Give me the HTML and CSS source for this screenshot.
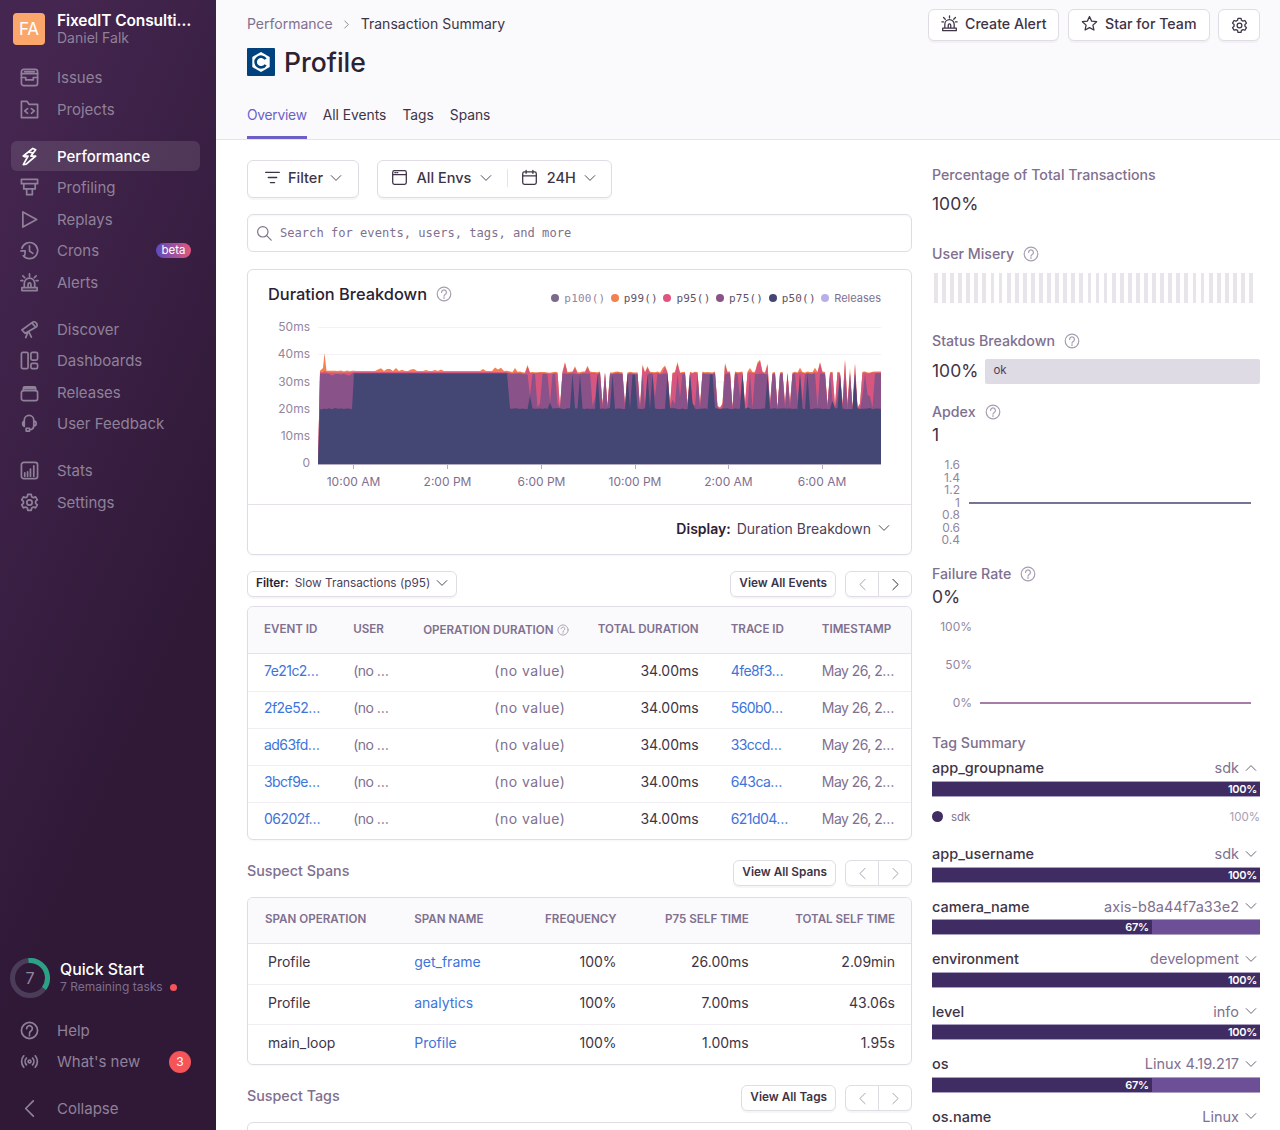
FILE: index.html
```html
<!DOCTYPE html>
<html lang="en">
<head>
<meta charset="utf-8">
<title>Profile - Transaction Summary</title>
<link rel="stylesheet" href="styles.css">
</head>
<body>
<svg class="sprite" aria-hidden="true">
  <defs>
    <symbol id="i-issues" viewBox="0 0 20 20"><rect x="1.500" y="1.500" width="17" height="17" rx="2.500"/><path d="M1.500 6h17M1.500 10h4.500v2.500h8V10h4.500M5 3.800h10"/></symbol>
    <symbol id="i-projects" viewBox="0 0 20 20"><path d="M1.500 18.500V1.500h6l2 3h9v14zM8 9l-3 2.500L8 14M12 9l3 2.500L12 14"/></symbol>
    <symbol id="i-perf" viewBox="0 0 20 20"><path d="M13.500 1.500L3.500 9.500h5l-5 9 3-.5 10-8.500h-5l5-6.500zM3.500 9.500l2 1M9.500 5.500l3 .5"/></symbol>
    <symbol id="i-profiling" viewBox="0 0 20 20"><path d="M1.500 1.500h17v4.500h-17zM4 6v5.500h12V6M7 11.500v6h6v-6"/></symbol>
    <symbol id="i-replays" viewBox="0 0 20 20"><path d="M3 2l14.500 8L3 18z"/></symbol>
    <symbol id="i-crons" viewBox="0 0 20 20"><path d="M2 7.500A8.500 8.500 0 1 1 3.500 15.500M10 5v5.500l3.500 2.500M1 10.500h4.500l-.5 4.500"/></symbol>
    <symbol id="i-alert" viewBox="0 0 20 20"><path d="M4.500 15V11a5.500 5.500 0 0 1 11 0v4M2 15.500h16v3H2zM10 1v2.500M3 3l2 2M17 3l-2 2M1 8h2M17 8h2M8.500 15v-3a1.500 1.500 0 0 1 3 0v3"/></symbol>
    <symbol id="i-discover" viewBox="0 0 20 20"><path d="M2 10.500l3.500 3.500L17.500 7c1-1 .5-3-.5-4s-3-1.500-4-.5zM9 12l3 6M8.500 12.500L6 18.500M12.500 3l4 4.500"/></symbol>
    <symbol id="i-dash" viewBox="0 0 20 20"><rect x="1.500" y="1.500" width="7" height="17" rx="1.500"/><rect x="11.500" y="1.500" width="7" height="8" rx="1.500"/><rect x="11.500" y="13" width="7" height="5.500" rx="1.500"/></symbol>
    <symbol id="i-releases" viewBox="0 0 20 20"><rect x="1.500" y="8" width="17" height="10.500" rx="2"/><path d="M3.500 8V5.500a1.500 1.500 0 0 1 1.500-1.500h10a1.500 1.500 0 0 1 1.500 1.500V8M3.500 6h13"/></symbol>
    <symbol id="i-feedback" viewBox="0 0 20 20"><path d="M4.500 12V6.500a5 5 0 0 1 10 0V12M4.500 7.500a3 3 0 0 0 0 5.500M14.500 7.500a2.500 2.500 0 0 1 0 5M14.500 12c0 3-2 4.500-4.500 4.500M6.500 15h3.500v3h-3.500z"/></symbol>
    <symbol id="i-stats" viewBox="0 0 20 20"><rect x="1.500" y="1.500" width="17" height="17" rx="2.500"/><path d="M5 16v-3.500M8 16v-4.500M11 16V8.500M14.500 16V5"/></symbol>
    <symbol id="i-gear" viewBox="0 0 20 20"><path d="M8.200 1.500h3.600l.5 2.400 1.800 1 2.300-.8 1.800 3.100-1.800 1.600v2.100l1.800 1.600-1.800 3.100-2.300-.8-1.800 1-.5 2.400H8.200l-.5-2.400-1.800-1-2.300.8-1.800-3.100 1.800-1.600V8.800L1.800 7.200l1.800-3.100 2.300.8 1.800-1z"/><circle cx="10" cy="10" r="2.800"/></symbol>
    <symbol id="i-help" viewBox="0 0 20 20"><circle cx="10" cy="10" r="8.500"/><path d="M7 8a3 3 0 1 1 4.500 2.600c-1 .6-1.500 1.100-1.500 2.200M10 14.500v1"/></symbol>
    <symbol id="i-new" viewBox="0 0 20 20"><circle cx="10" cy="10" r="1.500"/><path d="M6.800 6.500a5 5 0 0 0 0 7M13.200 6.500a5 5 0 0 1 0 7M4 4a9 9 0 0 0 0 12M16 4a9 9 0 0 1 0 12"/></symbol>
    <symbol id="i-left" viewBox="0 0 20 20"><path d="M14 2l-8 8 8 8"/></symbol>
    <symbol id="i-right" viewBox="0 0 20 20"><path d="M6 2l8 8-8 8"/></symbol>
    <symbol id="i-down" viewBox="0 0 20 20"><path d="M2 6l8 8 8-8"/></symbol>
    <symbol id="i-up" viewBox="0 0 20 20"><path d="M2 14l8-8 8 8"/></symbol>
    <symbol id="i-star" viewBox="0 0 20 20"><path d="M10 1.800l2.500 5.400 5.900.7-4.400 4 1.200 5.800-5.200-2.900-5.200 2.900L6 11.900l-4.400-4 5.900-.7z"/></symbol>
    <symbol id="i-lines" viewBox="0 0 20 20"><path d="M2 4h16M5 10h10M7.500 16h5"/></symbol>
    <symbol id="i-window" viewBox="0 0 20 20"><rect x="2" y="2" width="16" height="16" rx="2"/><path d="M2 6.500h16M4.500 4.300h1M7 4.300h1"/></symbol>
    <symbol id="i-cal" viewBox="0 0 20 20"><rect x="2" y="3.500" width="16" height="14.500" rx="2"/><path d="M2 8h16M6 1.500v3.500M14 1.500v3.500"/></symbol>
    <symbol id="i-search" viewBox="0 0 20 20"><circle cx="8.500" cy="8.500" r="6.500"/><path d="M13.300 13.300L19 19"/></symbol>
  </defs>
</svg>

<div class="app">
  <aside class="sidebar">
    <div class="org">
      <div class="avatar">FA</div>
      <div class="org-text">
        <div class="org-name">FixedIT Consulti…</div>
        <div class="org-user">Daniel Falk</div>
      </div>
    </div>
    <nav class="nav">
      <div class="nav-group">
        <a class="nav-item"><svg class="nav-icon"><use href="#i-issues"/></svg>Issues</a>
        <a class="nav-item"><svg class="nav-icon"><use href="#i-projects"/></svg>Projects</a>
      </div>
      <div class="nav-group">
        <a class="nav-item active"><svg class="nav-icon"><use href="#i-perf"/></svg>Performance</a>
        <a class="nav-item"><svg class="nav-icon"><use href="#i-profiling"/></svg>Profiling</a>
        <a class="nav-item"><svg class="nav-icon"><use href="#i-replays"/></svg>Replays</a>
        <a class="nav-item"><svg class="nav-icon"><use href="#i-crons"/></svg>Crons<span class="beta">beta</span></a>
        <a class="nav-item"><svg class="nav-icon"><use href="#i-alert"/></svg>Alerts</a>
      </div>
      <div class="nav-group">
        <a class="nav-item"><svg class="nav-icon"><use href="#i-discover"/></svg>Discover</a>
        <a class="nav-item"><svg class="nav-icon"><use href="#i-dash"/></svg>Dashboards</a>
        <a class="nav-item"><svg class="nav-icon"><use href="#i-releases"/></svg>Releases</a>
        <a class="nav-item"><svg class="nav-icon"><use href="#i-feedback"/></svg>User Feedback</a>
      </div>
      <div class="nav-group">
        <a class="nav-item"><svg class="nav-icon"><use href="#i-stats"/></svg>Stats</a>
        <a class="nav-item"><svg class="nav-icon"><use href="#i-gear"/></svg>Settings</a>
      </div>
    </nav>
    <div class="side-foot">
      <div class="quick">
        <svg class="ring" viewBox="0 0 40 40">
          <circle class="ring-track" cx="20" cy="20" r="17.500"/>
          <circle class="ring-fill" cx="20" cy="20" r="17.500"/>
          <text class="ring-num" x="20" y="25.500">7</text>
        </svg>
        <div class="quick-text">
          <div class="quick-title">Quick Start</div>
          <div class="quick-sub">7 Remaining tasks<span class="red-dot"></span></div>
        </div>
      </div>
      <div class="foot-links">
        <a class="nav-item"><svg class="nav-icon"><use href="#i-help"/></svg>Help</a>
        <a class="nav-item"><svg class="nav-icon"><use href="#i-new"/></svg>What's new<span class="count">3</span></a>
      </div>
      <a class="nav-item collapse"><svg class="nav-icon"><use href="#i-left"/></svg>Collapse</a>
    </div>
  </aside>

  <main class="main">
    <header class="page-head">
      <div class="head-top">
        <div class="head-left">
          <div class="crumbs"><span class="crumb-link">Performance</span><svg class="crumb-sep"><use href="#i-right"/></svg><span>Transaction Summary</span></div>
          <h1 class="title">
            <svg class="logo" viewBox="0 0 28 28"><rect width="28" height="28" rx="1" fill="#00427e"/><path d="M14 4l8.700 5v10L14 24l-8.700-5V9z" fill="#fff"/><path d="M18.600 11.200a5.400 5.400 0 1 0 0 5.600" fill="none" stroke="#00427e" stroke-width="2.600"/></svg>
            Profile
          </h1>
        </div>
        <div class="head-actions">
          <button class="btn btn-head"><svg class="btn-icon"><use href="#i-alert"/></svg>Create Alert</button>
          <button class="btn btn-head"><svg class="btn-icon"><use href="#i-star"/></svg>Star for Team</button>
          <button class="btn btn-gear"><svg class="btn-icon"><use href="#i-gear"/></svg></button>
        </div>
      </div>
      <div class="tabs">
        <a class="tab current">Overview</a>
        <a class="tab">All Events</a>
        <a class="tab">Tags</a>
        <a class="tab">Spans</a>
      </div>
    </header>

    <div class="content">
      <section class="col-left">
        <div class="filters">
          <button class="btn btn-filter"><svg class="btn-icon"><use href="#i-lines"/></svg>Filter<svg class="chev"><use href="#i-down"/></svg></button>
          <div class="btn page-filter">
            <span class="pf-part"><svg class="btn-icon"><use href="#i-window"/></svg>All Envs<svg class="chev"><use href="#i-down"/></svg></span>
            <span class="pf-sep"></span>
            <span class="pf-part"><svg class="btn-icon"><use href="#i-cal"/></svg>24H<svg class="chev"><use href="#i-down"/></svg></span>
          </div>
        </div>
        <div class="search"><svg class="search-icon"><use href="#i-search"/></svg><span>Search for events, users, tags, and more</span></div>

        <div class="card chart-card">
          <div class="chart-head">
            <div class="chart-title">Duration Breakdown<svg class="help-lg"><use href="#i-help"/></svg></div>
            <div class="legend">
              <span class="lg"><i class="dot c-100"></i><span class="mono muted">p100()</span></span>
              <span class="lg"><i class="dot c-99"></i><span class="mono">p99()</span></span>
              <span class="lg"><i class="dot c-95"></i><span class="mono">p95()</span></span>
              <span class="lg"><i class="dot c-75"></i><span class="mono">p75()</span></span>
              <span class="lg"><i class="dot c-50"></i><span class="mono">p50()</span></span>
              <span class="lg"><i class="dot c-rel"></i><span>Releases</span></span>
            </div>
          </div>
          <svg id="duration-chart" class="chart" viewBox="248 317 663 187">
            <g class="grid-lines">
              <path d="M318 327.500H881M318 354.500H881M318 382H881M318 409.500H881M318 437H881"/>
            </g>
            <path id="s99" fill="#f38150"/>
            <path id="s95" fill="#d6567f"/>
            <path id="s75" fill="#895289"/>
            <path id="s50" fill="#444674"/>
            <path class="axis" d="M318 464.500H881M353.500 465v4M447.500 465v4M541.500 465v4M635.500 465v4M728.500 465v4M822.500 465v4"/>
            <g class="y-labels">
              <text x="310" y="331">50ms</text><text x="310" y="358">40ms</text><text x="310" y="385.500">30ms</text><text x="310" y="413">20ms</text><text x="310" y="440">10ms</text><text x="310" y="467">0</text>
            </g>
            <g class="x-labels">
              <text x="353.500" y="486">10:00 AM</text><text x="447.500" y="486">2:00 PM</text><text x="541.500" y="486">6:00 PM</text><text x="635" y="486">10:00 PM</text><text x="728.500" y="486">2:00 AM</text><text x="822" y="486">6:00 AM</text>
            </g>
          </svg>
          <div class="chart-foot"><b>Display:</b><span class="disp-val">Duration Breakdown</span><svg class="chev"><use href="#i-down"/></svg></div>
        </div>

        <div class="sec-row first">
          <button class="btn btn-small btn-tfilter"><b>Filter:</b><span class="tf-val">Slow Transactions (p95)</span><svg class="chev"><use href="#i-down"/></svg></button>
          <div class="sec-actions">
            <button class="btn btn-small">View All Events</button>
            <div class="btn pager"><span class="pg off"><svg><use href="#i-left"/></svg></span><span class="pg"><svg><use href="#i-right"/></svg></span></div>
          </div>
        </div>
        <table class="card tbl tbl-events">
          <thead><tr><th>Event ID</th><th>User</th><th class="r op">Operation Duration<svg class="help-sm"><use href="#i-help"/></svg></th><th class="r">Total Duration</th><th>Trace ID</th><th>Timestamp</th></tr></thead>
          <tbody>
            <tr><td class="tr"><a>7e21c2…</a></td><td class="mut tr">(no …</td><td class="r mut nv">(no value)</td><td class="r">34.00ms</td><td class="tr"><a>4fe8f3…</a></td><td class="mut tr">May 26, 2…</td></tr>
            <tr><td class="tr"><a>2f2e52…</a></td><td class="mut tr">(no …</td><td class="r mut nv">(no value)</td><td class="r">34.00ms</td><td class="tr"><a>560b0…</a></td><td class="mut tr">May 26, 2…</td></tr>
            <tr><td class="tr"><a>ad63fd…</a></td><td class="mut tr">(no …</td><td class="r mut nv">(no value)</td><td class="r">34.00ms</td><td class="tr"><a>33ccd…</a></td><td class="mut tr">May 26, 2…</td></tr>
            <tr><td class="tr"><a>3bcf9e…</a></td><td class="mut tr">(no …</td><td class="r mut nv">(no value)</td><td class="r">34.00ms</td><td class="tr"><a>643ca…</a></td><td class="mut tr">May 26, 2…</td></tr>
            <tr><td class="tr"><a>06202f…</a></td><td class="mut tr">(no …</td><td class="r mut nv">(no value)</td><td class="r">34.00ms</td><td class="tr"><a>621d04…</a></td><td class="mut tr">May 26, 2…</td></tr>
          </tbody>
        </table>

        <div class="sec-row">
          <h2 class="sec-title">Suspect Spans</h2>
          <div class="sec-actions">
            <button class="btn btn-small">View All Spans</button>
            <div class="btn pager"><span class="pg off"><svg><use href="#i-left"/></svg></span><span class="pg off"><svg><use href="#i-right"/></svg></span></div>
          </div>
        </div>
        <table class="card tbl tbl-spans">
          <thead><tr><th>Span Operation</th><th>Span Name</th><th class="r">Frequency</th><th class="r">P75 Self Time</th><th class="r">Total Self Time</th></tr></thead>
          <tbody>
            <tr><td class="pad">Profile</td><td><a>get_frame</a></td><td class="r">100%</td><td class="r">26.00ms</td><td class="r">2.09min</td></tr>
            <tr><td class="pad">Profile</td><td><a>analytics</a></td><td class="r">100%</td><td class="r">7.00ms</td><td class="r">43.06s</td></tr>
            <tr><td class="pad">main_loop</td><td><a>Profile</a></td><td class="r">100%</td><td class="r">1.00ms</td><td class="r">1.95s</td></tr>
          </tbody>
        </table>

        <div class="sec-row">
          <h2 class="sec-title">Suspect Tags</h2>
          <div class="sec-actions">
            <button class="btn btn-small">View All Tags</button>
            <div class="btn pager"><span class="pg off"><svg><use href="#i-left"/></svg></span><span class="pg off"><svg><use href="#i-right"/></svg></span></div>
          </div>
        </div>
        <div class="card tags-table"></div>
      </section>

      <section class="col-right">
        <h3 class="side-h s-pct">Percentage of Total Transactions</h3>
        <div class="side-val v-pct">100%</div>

        <h3 class="side-h s-misery">User Misery<svg class="help-lg"><use href="#i-help"/></svg></h3>
        <div class="misery"></div>

        <h3 class="side-h s-status">Status Breakdown<svg class="help-lg"><use href="#i-help"/></svg></h3>
        <div class="status"><span class="side-val">100%</span><span class="status-bar">ok</span></div>

        <h3 class="side-h s-apdex">Apdex<svg class="help-lg"><use href="#i-help"/></svg></h3>
        <div class="side-val v-tight">1</div>
        <svg class="mini mini-apdex" viewBox="932 458 328 90">
          <g class="mini-labels">
            <text x="960" y="469">1.6</text><text x="960" y="481.500">1.4</text><text x="960" y="494">1.2</text><text x="960" y="506.500">1</text><text x="960" y="519">0.8</text><text x="960" y="531.500">0.6</text><text x="960" y="544">0.4</text>
          </g>
          <path d="M969 503H1251" stroke="#444674" stroke-width="1.500"/>
        </svg>

        <h3 class="side-h s-fail">Failure Rate<svg class="help-lg"><use href="#i-help"/></svg></h3>
        <div class="side-val v-tight">0%</div>
        <svg class="mini mini-fail" viewBox="932 615 328 100">
          <g class="mini-labels">
            <text x="972" y="631">100%</text><text x="972" y="669">50%</text><text x="972" y="706.500">0%</text>
          </g>
          <path d="M980 703H1251" stroke="#895289" stroke-width="1.500"/>
        </svg>

        <h3 class="side-h s-tags">Tag Summary</h3>
        <div class="tag first-tag">
          <div class="tag-head"><span class="tag-key">app_groupname</span><span class="tag-val">sdk</span><svg class="chev"><use href="#i-up"/></svg></div>
          <div class="tag-bar"><span class="seg w-100">100%</span></div>
          <div class="tag-detail"><i class="tag-dot"></i><span>sdk</span><span class="tag-pct">100%</span></div>
        </div>
        <div class="tag">
          <div class="tag-head"><span class="tag-key">app_username</span><span class="tag-val">sdk</span><svg class="chev"><use href="#i-down"/></svg></div>
          <div class="tag-bar"><span class="seg w-100">100%</span></div>
        </div>
        <div class="tag">
          <div class="tag-head"><span class="tag-key">camera_name</span><span class="tag-val">axis-b8a44f7a33e2</span><svg class="chev"><use href="#i-down"/></svg></div>
          <div class="tag-bar"><span class="seg w-67">67%</span></div>
        </div>
        <div class="tag">
          <div class="tag-head"><span class="tag-key">environment</span><span class="tag-val">development</span><svg class="chev"><use href="#i-down"/></svg></div>
          <div class="tag-bar"><span class="seg w-100">100%</span></div>
        </div>
        <div class="tag">
          <div class="tag-head"><span class="tag-key">level</span><span class="tag-val">info</span><svg class="chev"><use href="#i-down"/></svg></div>
          <div class="tag-bar"><span class="seg w-100">100%</span></div>
        </div>
        <div class="tag">
          <div class="tag-head"><span class="tag-key">os</span><span class="tag-val">Linux 4.19.217</span><svg class="chev"><use href="#i-down"/></svg></div>
          <div class="tag-bar"><span class="seg w-67">67%</span></div>
        </div>
        <div class="tag">
          <div class="tag-head"><span class="tag-key">os.name</span><span class="tag-val">Linux</span><svg class="chev"><use href="#i-down"/></svg></div>
        </div>
      </section>
    </div>
  </main>
</div>
<script src="chart.js"></script>
</body>
</html>
```

FILE: styles.css
```css
* { box-sizing: border-box; }
html, body { margin: 0; height: 100%; overflow: hidden; }
body { font-family: Inter, "Noto Sans", sans-serif; font-size: 14.5px; color: #3e3446; background: #fff; }
.sprite { position: absolute; width: 0; height: 0; }
svg use { fill: none; stroke: currentColor; stroke-width: 1.500; stroke-linecap: round; stroke-linejoin: round; }
h1, h2, h3 { margin: 0; font-weight: 500; }
button { font: inherit; color: inherit; }

.app { display: flex; height: 1130px; overflow: hidden; }

/* sidebar */
.sidebar { width: 216px; flex: none; display: flex; flex-direction: column; padding: 13px 16px 7px 11px; background: linear-gradient(294.17deg, #2f1937 35.57%, #452650 92.42%); color: #9386a0; }
.org { display: flex; align-items: center; gap: 12px; margin-left: 2px; height: 32px; }
.avatar { width: 32px; height: 32px; border-radius: 4px; background: #fba76b; color: #fff; font-size: 17px; display: flex; align-items: center; justify-content: center; }
.org-name { color: #fff; font-weight: 600; font-size: 15.500px; line-height: 17px; white-space: nowrap; letter-spacing: -.1px; }
.org-user { font-size: 14px; line-height: 17px; color: #8f8199; }
.nav { margin-top: 17.500px; }
.nav-group + .nav-group { margin-top: 17px; }
.nav-item { display: flex; align-items: center; height: 30px; margin-bottom: 1.500px; padding-left: 9px; padding-right: 9px; gap: 19px; border-radius: 6px; font-size: 15px; color: #8f8199; }
.nav-icon { width: 19px; height: 19px; flex: none; margin-right: -1px; }
.nav-item .nav-icon use { stroke-width: 1.800; }
.nav-item.active { background: rgba(255,255,255,.11); color: #fff; font-weight: 500; }
.beta { margin-left: auto; width: 35px; height: 15px; border-radius: 8px; background: linear-gradient(90deg, #5b4bc0, #e1567c); color: #fff; font-size: 11.500px; line-height: 15px; text-align: center; }
.count { margin-left: auto; width: 22px; height: 22px; border-radius: 50%; background: #f55459; color: #fff; font-size: 12px; line-height: 22px; text-align: center; }
.side-foot { margin-top: auto; }
.quick { display: flex; align-items: center; gap: 10px; height: 40px; margin-left: -1px; }
.ring { width: 40px; height: 40px; flex: none; }
.ring-track { fill: none; stroke: #4b3c59; stroke-width: 5; }
.ring-fill { fill: none; stroke: #2ba185; stroke-width: 5; stroke-dasharray: 40 110; transform: rotate(-95deg); transform-origin: 20px 20px; }
.ring-num { fill: #9386a0; font-size: 16px; text-anchor: middle; }
.quick-title { color: #fff; font-size: 15.800px; font-weight: 500; line-height: 18px; }
.quick-sub { font-size: 12px; line-height: 16px; color: #7d6e8b; display: flex; align-items: center; white-space: nowrap; }
.red-dot { width: 7px; height: 7px; border-radius: 50%; background: #f55459; margin-left: 7px; }
.foot-links { margin-top: 17px; }
.collapse { margin-top: 16.500px; margin-bottom: 0; }

/* header */
.main { flex: 1; min-width: 0; }
.page-head { height: 139.500px; background: #faf9fb; border-bottom: 1px solid #e7e1ec; padding: 9px 20px 0 31px; display: flex; flex-direction: column; }
.head-top { display: flex; justify-content: space-between; align-items: flex-start; }
.crumbs { display: flex; align-items: center; height: 28px; font-size: 14px; color: #3e3446; }
.crumb-link { color: #80708f; }
.crumb-sep { width: 9px; height: 11px; margin: 2px 10px 0 9px; color: #5f5269; }
.title { display: flex; align-items: center; gap: 9px; font-size: 26.500px; font-weight: 500; color: #2b2233; margin-top: 11px; height: 28px; }
.logo { width: 28px; height: 28px; }
.head-actions { display: flex; gap: 8.500px; }
.btn { display: inline-flex; align-items: center; background: #fff; border: 1px solid #e0dce5; border-radius: 6px; box-shadow: 0 2px 0 rgba(43,34,51,.04); font-weight: 500; }
.btn-head { height: 32px; padding: 0 12px 3px; gap: 7px; font-size: 14.200px; }
.btn-gear { width: 42px; height: 32px; justify-content: center; padding: 0; }
.btn-icon { width: 17px; height: 17px; flex: none; }
.tabs { margin-top: auto; display: flex; gap: 16px; }
.tab { height: 38px; line-height: 28px; font-size: 13.800px; color: #3e3446; }
.tab.current { color: #6c5fc7; border-bottom: 3px solid #6c5fc7; letter-spacing: -.25px; }

/* content */
.content { display: grid; grid-template-columns: 665px 328px; gap: 20px; padding: 20.500px 0 0 31px; }
.filters { display: flex; gap: 18px; }
.btn-filter { height: 38px; width: 112px; padding: 0 0 3px 16px; gap: 7px; }
.chev { width: 12px; height: 12px; flex: none; color: #3e3446; }
.page-filter { height: 38px; width: 235px; padding: 0 0 3px 13px; }
.pf-part { display: inline-flex; align-items: center; gap: 8.500px; }
.pf-sep { width: 1px; height: 18px; background: #e7e1ec; margin: 0 13px 0 15.500px; }
.search { display: flex; align-items: center; height: 38px; margin-top: 16px; border: 1px solid #e0dce5; border-radius: 6px; padding-left: 8px; gap: 8px; background: #fff; font-family: "DejaVu Sans Mono", monospace; font-size: 12.100px; color: #80708f; box-shadow: inset 0 1px 2px rgba(43,34,51,.04); }
.search-icon { width: 16px; height: 16px; color: #80708f; }
.card { border: 1px solid #e0dce5; border-radius: 6px; background: #fff; box-shadow: 0 1px 2px rgba(43,34,51,.04); }
.chart-card { margin-top: 17px; height: 286px; }
.chart-head { height: 47px; display: flex; justify-content: space-between; padding: 14px 30px 0 20px; }
.chart-title { font-size: 16.400px; font-weight: 500; color: #2b2233; display: flex; align-items: center; gap: 9px; height: 20px; }
.help-lg { width: 16px; height: 16px; color: #a79db1; flex: none; }
.legend { display: flex; gap: 5.500px; font-size: 11px; color: #80708f; align-self: flex-start; margin-top: 7px; }
.lg { display: flex; align-items: center; gap: 5px; }
.mono { font-family: "DejaVu Sans Mono", monospace; font-size: 11px; color: #5f5269; letter-spacing: .2px; }
.mono.muted { color: #9386a0; }
.dot { width: 8px; height: 8px; border-radius: 50%; }
.c-100 { background: #7c6a8e; } .c-99 { background: #f38150; } .c-95 { background: #e0557f; } .c-75 { background: #895289; } .c-50 { background: #444674; } .c-rel { background: #b9aee6; }
.chart { display: block; width: 663px; height: 187px; }
.grid-lines path { stroke: #f4f2f6; fill: none; }
.axis { stroke: #b6acc0; fill: none; }
.y-labels text { fill: #9386a0; font-size: 12px; text-anchor: end; }
.x-labels text { fill: #80708f; font-size: 12px; text-anchor: middle; }
.chart-foot { display: flex; align-items: center; justify-content: flex-end; height: 50px; border-top: 1px solid #e7e1ec; padding: 0 21px 3px 0; font-size: 14px; color: #4d4158; }
.chart-foot b { font-weight: 600; color: #2b2233; }
.disp-val { margin-left: 6px; }
.chart-foot .chev { margin-left: 7px; }

.sec-row { display: flex; justify-content: space-between; align-items: center; height: 26px; margin-top: 20px; }
.sec-row.first { margin-top: 16px; }
.sec-actions { display: flex; gap: 9px; }
.btn-small { height: 26px; padding: 0 8px 1.500px; font-size: 11.800px; font-weight: 600; }
.btn-tfilter { font-weight: 400; color: #4d4158; }
.btn-tfilter b { font-weight: 600; color: #2b2233; }
.tf-val { margin-left: 6px; }
.btn-tfilter .chev { margin-left: 6px; }
.pager { height: 26px; width: 67px; }
.pg { flex: 1; height: 100%; display: flex; align-items: center; justify-content: center; color: #2b2233; }
.pg + .pg { border-left: 1px solid #e0dce5; }
.pg svg { width: 13px; height: 13px; }
.pg.off { color: #a79db1; }
.sec-title { font-size: 14.300px; color: #80708f; padding-bottom: 5px; }

.tbl { width: 665px; border-collapse: separate; border-spacing: 0; table-layout: fixed; margin-top: 9px; overflow: hidden; font-size: 14px; }
.tbl th { background: #faf9fb; text-transform: uppercase; font-size: 11.600px; font-weight: 600; color: #80708f; text-align: left; padding: 0 16px 3px; border-bottom: 1px solid #e7e1ec; white-space: nowrap; }
.tbl td { padding: 0 16px 5px; border-top: 1px solid #f0edf3; white-space: nowrap; color: #3e3446; }
.tbl tbody tr:first-child td { border-top: 0; }
.tbl a { color: #3d74db; }
.tbl .r { text-align: right; }
.tbl .mut { color: #80708f; }
.tbl .nv { letter-spacing: .5px; }
.tbl .tr { letter-spacing: -.55px; }
.tbl thead tr { height: 47px; }
.tbl-events tbody tr { height: 37px; }
.tbl-events th:nth-child(1) { width: 89px; } .tbl-events th:nth-child(2) { width: 68px; } .tbl-events th:nth-child(3) { width: 176px; } .tbl-events th:nth-child(4) { width: 133px; } .tbl-events th:nth-child(5) { width: 91px; } .tbl-events th:nth-child(6) { width: 105px; }
.tbl th.op { padding-right: 12px; padding-left: 0; padding-top: 0; padding-bottom: 0; }
.help-sm { width: 12px; height: 12px; margin-left: 4px; vertical-align: -2px; color: #a79db1; }
.tbl-spans { margin-top: 11px; }
.tbl-spans thead tr { height: 46px; }
.tbl-spans tbody tr { height: 40px; }
.tbl-spans th:nth-child(1) { width: 150px; } .tbl-spans th:nth-child(2) { width: 122px; } .tbl-spans th:nth-child(3) { width: 112px; } .tbl-spans th:nth-child(4) { width: 132px; } .tbl-spans th:nth-child(5) { width: 146px; }
.tbl-spans th:nth-child(1) { padding-left: 17px; }
.tbl td.pad { padding-left: 20px; }
.tags-table { height: 60px; margin-top: 11px; }

/* right column */
.col-right { min-width: 0; padding-top: 4.500px; }
.side-h { display: flex; align-items: center; gap: 9px; height: 20px; font-size: 14.200px; color: #80708f; }
.side-val { font-size: 17.500px; line-height: 24px; color: #3e3446; }
.v-pct { margin-top: 7px; margin-bottom: -1px; }
.s-misery { margin-top: 29px; }
.misery { height: 30px; margin-top: 9px; margin-left: 2px; width: 322px; background: repeating-linear-gradient(90deg, #e7e4ea 0 3.800px, transparent 3.800px 8.080px); }
.s-status { margin-top: 28px; }
.status { display: flex; align-items: center; gap: 7px; margin-top: 8px; height: 25px; }
.status-bar { flex: 1; height: 25px; background: #dedbe4; border-radius: 2px; font-size: 11.500px; line-height: 22px; padding-left: 8px; color: #4d4158; }
.s-apdex { margin-top: 18px; }
.v-tight { margin-top: 1px; }
.mini { display: block; }
.mini-apdex { width: 328px; height: 90px; margin-top: 11px; }
.mini-fail { width: 328px; height: 100px; margin-top: 6px; }
.mini-labels text { fill: #9386a0; font-size: 12px; text-anchor: end; }
.s-fail { margin-top: 16px; }
.s-tags { margin-top: 18px; }
.tag { margin-top: 13.500px; }
.first-tag { margin-top: 5px; }
.tag-head { display: flex; align-items: center; height: 20px; gap: 6px; }
.tag-key { font-size: 14.500px; font-weight: 500; color: #3e3446; margin-right: auto; }
.tag-val { font-size: 14.500px; color: #80708f; }
.tag-head .chev { margin-right: 3px; color: #5f5269; }
.tag-bar { height: 16px; margin-top: 3px; background: #6c4f96; border-top: 1px solid #a99fc0; border-bottom: 1px solid #a99fc0; display: flex; }
.seg { background: #3e2c63; color: #fff; font-size: 11px; font-weight: 600; text-align: right; padding-right: 3px; line-height: 14px; letter-spacing: -.3px; }
.w-100 { width: 100%; } .w-67 { width: 67%; }
.tag-detail { display: flex; align-items: center; height: 20px; margin-top: 10px; margin-bottom: 17px; font-size: 11.500px; color: #80708f; }
.tag-dot { width: 11px; height: 11px; border-radius: 50%; background: #3e2c63; margin-right: 8px; }
.tag-pct { margin-left: auto; color: #a79db1; }
```

FILE: chart.js
```js
// Builds the stacked areas of the duration chart from seeded sample data.
(function () {
  var seed = 11;
  function rnd() { seed = (seed * 16807) % 2147483647; return (seed % 1000) / 1000; }
  function y(ms) { return 464 - ms * 2.74; }
  var xs = [], s50 = [], s75 = [], s95 = [], s99 = [];
  function push(x, a, b, c, d) { xs.push(x); s50.push(a); s75.push(b); s95.push(c); s99.push(d); }

  push(318, 0, 0, 0, 0);
  push(320, 20, 33, 33.5, 34);
  push(323, 20, 33, 33.5, 35);
  push(324.5, 20.3, 33, 34, 40.5);
  push(326.5, 20, 33, 33.5, 34);
  for (var x = 329; x < 352; x += 3) push(x, 20 + rnd() * .4, 33 - rnd() * .8, 33.4, 33.7 + rnd() * .5);
  push(352, 20, 33, 33.5, 34);
  push(354, 33, 33.2, 33.6, 34);
  for (x = 357; x < 507; x += 3) {
    var bump = rnd();
    push(x, 33, 33.2, 33.6, bump > .72 ? 34.2 + rnd() * 1 : 33.9);
  }
  push(507, 33, 33.2, 33.6, 34);
  for (x = 510; x < 881; x += 2.5) {
    var base = 20 + rnd() * .4, top = 33 + rnd() * .4, mode = rnd();
    var a = rnd() < .2 ? top - .4 : base;
    var b, c, d;
    if (mode < .15) { b = base; c = base + rnd() * 2; d = c + .2; }
    else if (mode < .35) { b = base + rnd() * 6; c = top; d = c + .3; }
    else if (mode < .87) { b = top - .3; c = top; d = c + .4; }
    else if (mode < .95) { b = top - .3; c = 35 + rnd() * 3; d = c + .6; }
    else { b = top - .3; c = top + .3; d = c + 1.5; }
    if (a > b) a = b;
    push(x, a, b, c, d);
  }
  push(881, 20, 33, 33.4, 33.8);
  function area(v) {
    var d = "M318 464";
    for (var i = 0; i < xs.length; i++) d += "L" + xs[i].toFixed(1) + " " + y(v[i]).toFixed(1);
    return d + "L881 464Z";
  }
  document.getElementById("s99").setAttribute("d", area(s99));
  document.getElementById("s95").setAttribute("d", area(s95));
  document.getElementById("s75").setAttribute("d", area(s75));
  document.getElementById("s50").setAttribute("d", area(s50));
})();
```
